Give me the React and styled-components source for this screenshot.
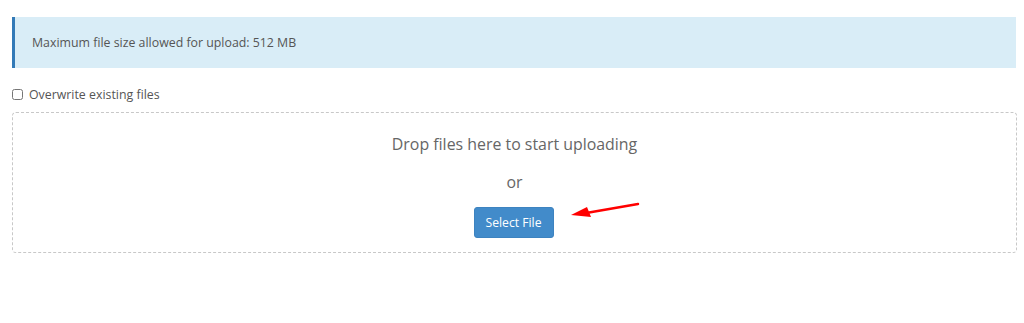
import React from "react";
import styled, { createGlobalStyle } from "styled-components";

const Global = createGlobalStyle`
  html, body { margin: 0; padding: 0; background: #fff; }
  body { font-family: "Open Sans", "Noto Sans", sans-serif; color: #555; }
  * { box-sizing: border-box; }
`;

const Page = styled.div`
  width: 1024px;
  height: 323px;
  padding: 17px 8px 0 12px;
  overflow: hidden;
`;

const Alert = styled.div`
  background: #d9edf7;
  border-left: 3px solid #337ab7;
  padding: 15px 17px;
  font-size: 12.35px;
  line-height: 21px;
  color: #555;
  width: 1004px;
`;

const CheckRow = styled.label`
  display: flex;
  align-items: center;
  gap: 6px;
  margin-top: 16px;
  height: 20px;
  font-size: 12.35px;
  color: #555;
`;

const Check = styled.input`
  margin: 0;
  width: 11px;
  height: 11px;
`;

const DropZone = styled.div`
  position: relative;
  margin-top: 8px;
  width: 1005px;
  height: 141px;
  border: 1px dashed #c8c8c8;
  border-radius: 4px;
  display: flex;
  flex-direction: column;
  align-items: center;
  padding-top: 20px;
`;

const DropText = styled.div`
  font-size: 15.9px;
  line-height: 22px;
  color: #666;
`;

const Or = styled.div`
  margin-top: 16px;
  font-size: 15.9px;
  line-height: 22px;
  color: #666;
`;

const SelectButton = styled.button`
  margin-top: 14px;
  margin-right: 2px;
  width: 80px;
  height: 31px;
  background: #428bca;
  border: 1px solid #3d83c0;
  border-radius: 3px;
  color: #fff;
  font-family: "Open Sans", "Noto Sans", sans-serif;
  font-size: 12.2px;
  padding: 0;
  cursor: pointer;
`;

const Arrow = styled.svg`
  position: absolute;
  left: 556px;
  top: 88px;
`;

export default function App() {
  return (
    <>
      <Global />
      <Page>
        <Alert>Maximum file size allowed for upload: 512 MB</Alert>
        <CheckRow>
          <Check type="checkbox" />
          Overwrite existing files
        </CheckRow>
        <DropZone>
          <DropText>Drop files here to start uploading</DropText>
          <Or>or</Or>
          <SelectButton>Select File</SelectButton>
          <Arrow width="80" height="24" viewBox="0 0 80 24">
            <line x1="69" y1="3" x2="20" y2="11.5" stroke="#ff0000" strokeWidth="2.5" strokeLinecap="round" />
            <polygon points="2,14 18,6 22,16" fill="#ff0000" />
          </Arrow>
        </DropZone>
      </Page>
    </>
  );
}
